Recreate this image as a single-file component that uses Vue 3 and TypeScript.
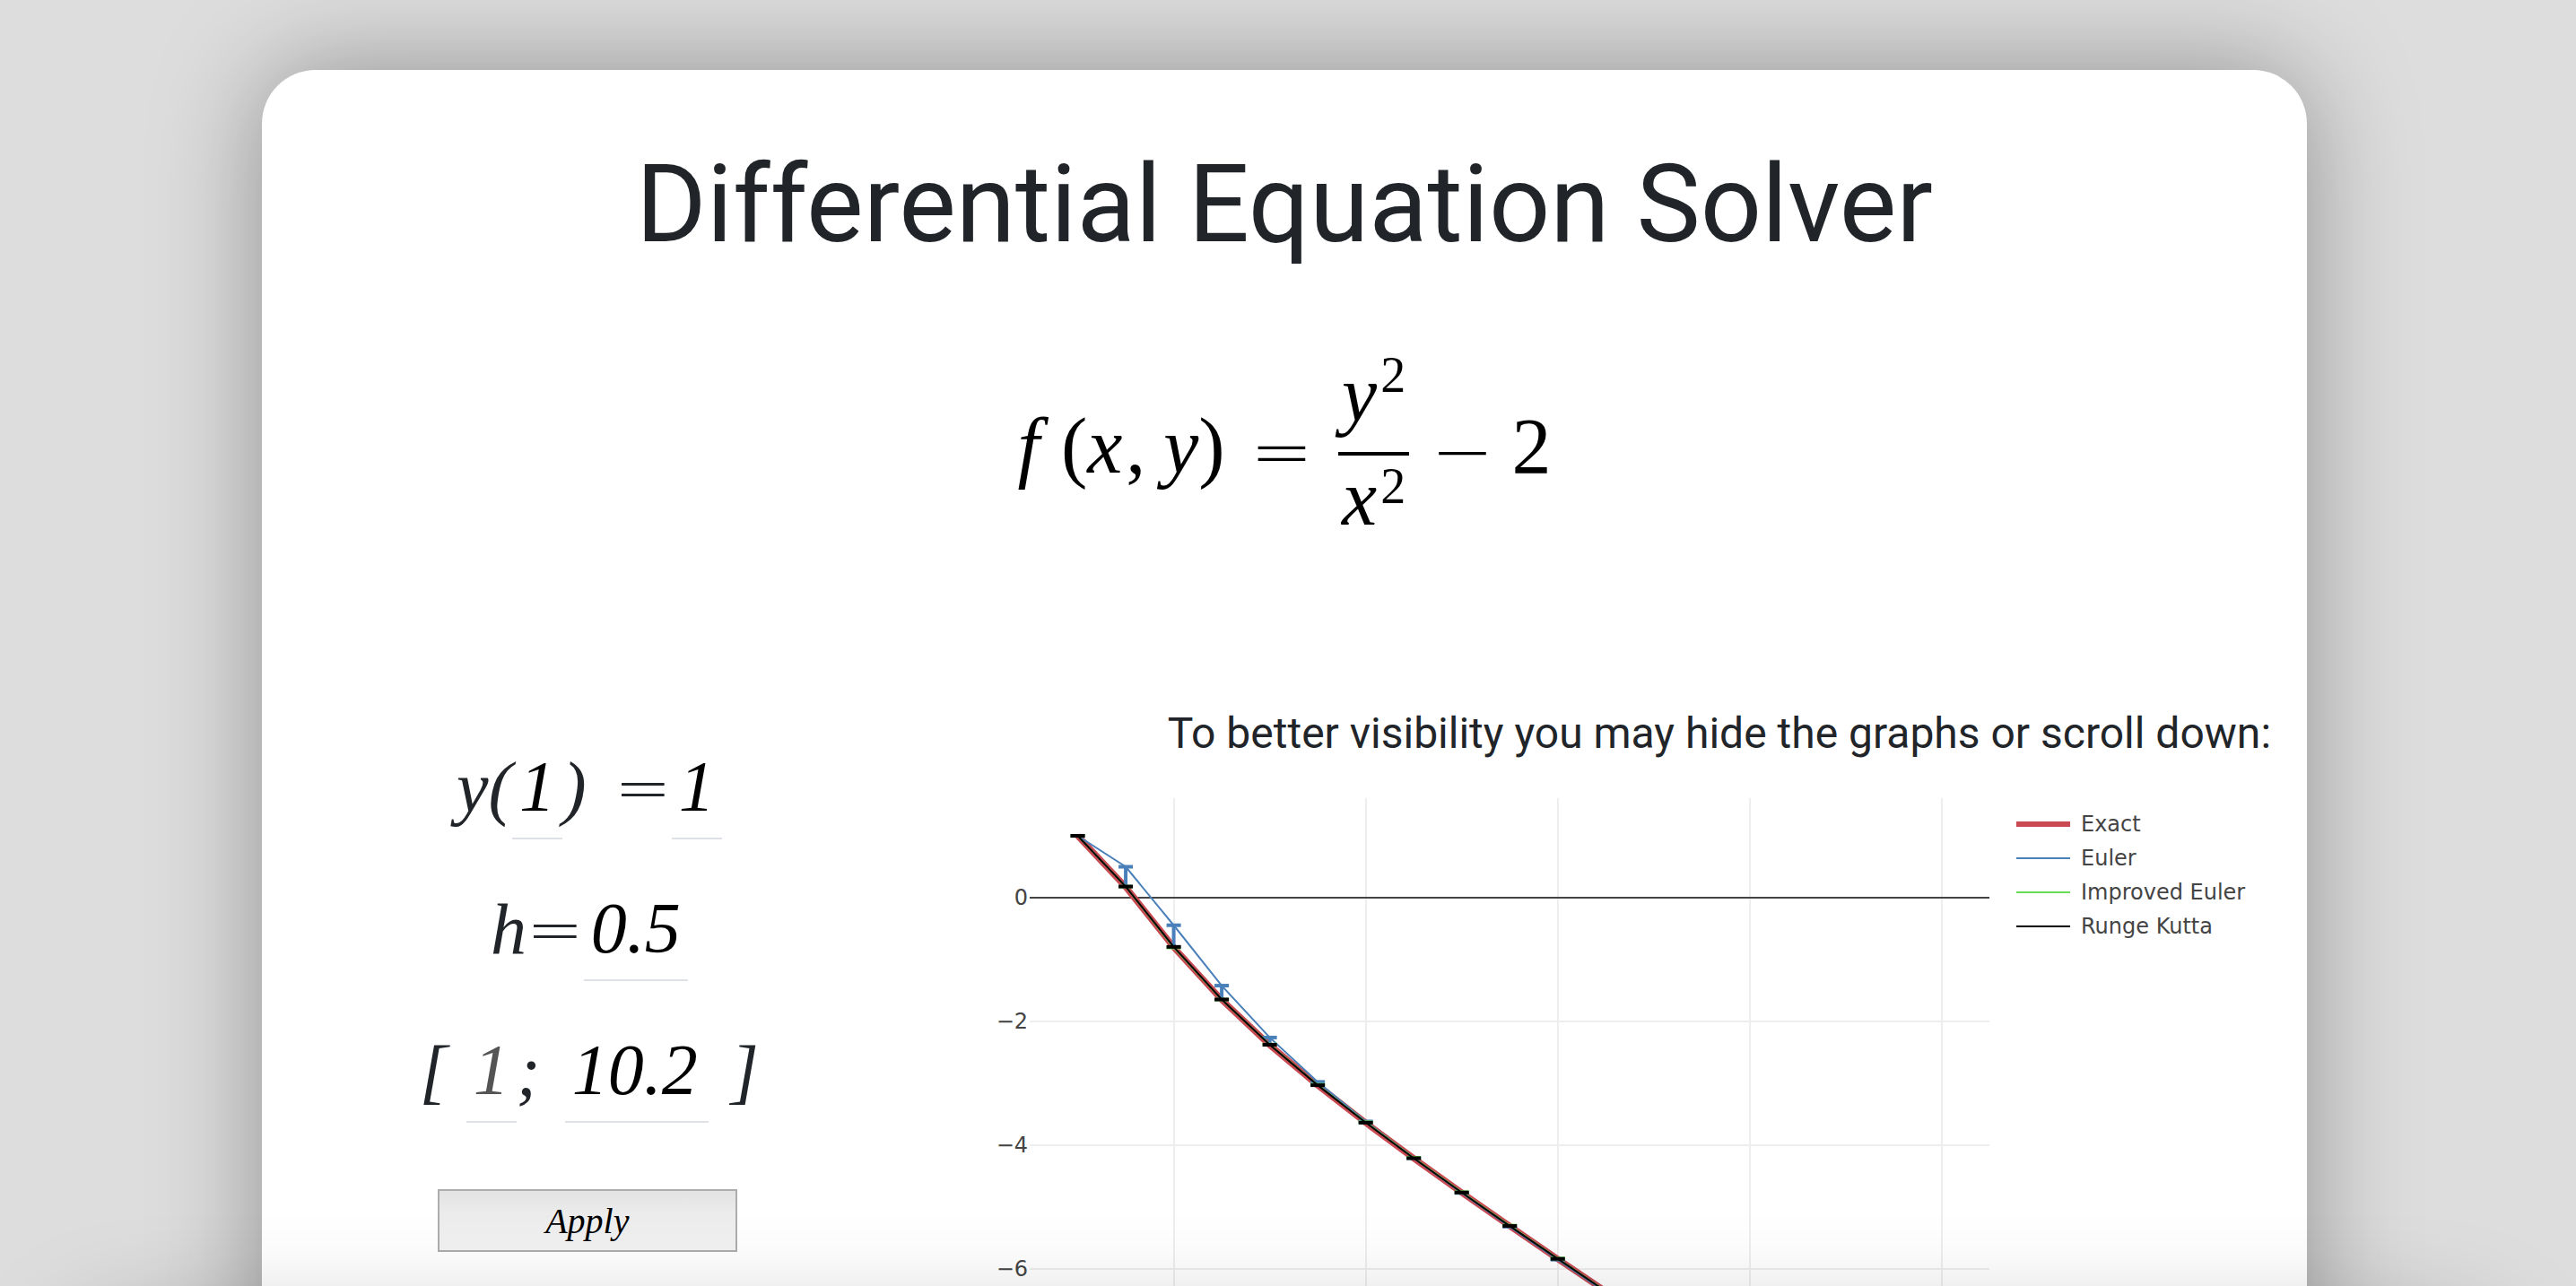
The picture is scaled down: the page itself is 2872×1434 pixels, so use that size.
<script setup lang="ts">
import { ref, computed } from 'vue'

interface Point { x: number; y: number }
interface Series { name: string; color: string; legendWidth: number; lineWidth: number; points: Point[]; bars: boolean }

const x0 = ref('1')
const y0 = ref('1')
const step = ref('0.5')
const end = ref('10.2')

const f = (x: number, y: number): number => (y * y) / (x * x) - 2

// Closed form of y' = y²/x² − 2 through (x0, y0)
const exactAt = (x: number): number => {
  const a = Number(x0.value)
  const v = Number(y0.value) / a
  const c = (v - 2) / ((v + 1) * a ** 3)
  const k = c * x ** 3
  return (x * (2 + k)) / (1 - k)
}

type Method = (x: number, y: number, h: number) => number

const euler: Method = (x, y, h) => y + h * f(x, y)
const improved: Method = (x, y, h) => y + h * f(x + h / 2, y + (h / 2) * f(x, y))
const rungeKutta: Method = (x, y, h) => {
  const k1 = f(x, y)
  const k2 = f(x + h / 2, y + (h / 2) * k1)
  const k3 = f(x + h / 2, y + (h / 2) * k2)
  const k4 = f(x + h, y + h * k3)
  return y + (h / 6) * (k1 + 2 * k2 + 2 * k3 + k4)
}

const xs = computed<number[]>(() => {
  const h = Number(step.value)
  const out: number[] = []
  if (!(h > 0)) return out
  for (let x = Number(x0.value); x <= Number(end.value) && out.length < 500; x += h) out.push(x)
  return out
})

const solve = (m: Method): Point[] => {
  let y = Number(y0.value)
  return xs.value.map((x, i) => {
    if (i > 0) y = m(xs.value[i - 1], y, x - xs.value[i - 1])
    return { x, y }
  })
}

const series = computed<Series[]>(() => [
  { name: 'Exact', color: '#c94a53', legendWidth: 6, lineWidth: 7, points: xs.value.map((x) => ({ x, y: exactAt(x) })), bars: false },
  { name: 'Euler', color: '#4a80ba', legendWidth: 2, lineWidth: 2, points: solve(euler), bars: true },
  { name: 'Improved Euler', color: '#66dd55', legendWidth: 2, lineWidth: 2, points: solve(improved), bars: true },
  { name: 'Runge Kutta', color: '#000000', legendWidth: 2, lineWidth: 2, points: solve(rungeKutta), bars: true },
])

const hidden = ref<string[]>([])
const toggle = (name: string): void => {
  hidden.value = hidden.value.includes(name) ? hidden.value.filter((n) => n !== name) : [...hidden.value, name]
}

// Plot coordinates
const left = 60
const px = (x: number): number => left + (x - 0.5) * 107
const py = (y: number): number => 111 - y * 69
const path = (p: Point[]): string => p.map((q) => `${px(q.x).toFixed(1)},${py(q.y).toFixed(1)}`).join(' ')
const xTicks = [2, 4, 6, 8, 10]
const yTicks = [-2, -4, -6, -8, -10]
</script>

<template>
  <div class="page">
    <main class="card">
      <h1>Differential Equation Solver</h1>

      <div class="formula">
        <span class="sym"><i class="fn">f</i>(<i>x</i><span class="comma">,</span><i>y</i>)</span>
        <span class="op eq">=</span>
        <span class="frac">
          <span class="num"><i>y</i><sup>2</sup></span>
          <span class="den"><i>x</i><sup>2</sup></span>
        </span>
        <span class="op">−</span>
        <span class="sym">2</span>
      </div>

      <div class="columns">
        <form class="params" @submit.prevent>
          <div class="row">
            <label for="x0">y(</label>
            <input id="x0" v-model="x0" class="short" />
            <label for="y0" class="after">)</label><label for="y0" class="op">=</label>
            <input id="y0" v-model="y0" class="short" />
          </div>
          <div class="row">
            <label for="h">h</label><label for="h" class="op">=</label>
            <input id="h" v-model="step" class="medium" />
          </div>
          <div class="row">
            <label for="from" class="open">[</label>
            <input id="from" :value="x0" class="short" disabled />
            <label for="to" class="semi">;</label>
            <input id="to" v-model="end" class="long" />
            <span class="close">]</span>
          </div>
          <button type="submit" class="apply">Apply</button>
        </form>

        <section class="graph">
          <h2>To better visibility you may hide the graphs or scroll down:</h2>
          <div class="chart">
            <svg class="plot" viewBox="0 0 1130 800" role="img" aria-label="Solutions">
              <line v-for="t in xTicks" :key="'x' + t" :x1="px(t)" :x2="px(t)" y1="0" y2="800" class="grid" />
              <line v-for="t in yTicks" :key="'y' + t" x1="60" x2="1130" :y1="py(t)" :y2="py(t)" class="grid" />
              <line x1="60" x2="1130" :y1="py(0)" :y2="py(0)" class="zero" />
              <text v-for="t in [0, ...yTicks]" :key="'t' + t" x="58" :y="py(t) + 8" class="tick">{{ String(t).replace('-', '−') }}</text>
              <template v-for="s in series" :key="s.name">
                <g v-if="!hidden.includes(s.name)" :stroke="s.color" fill="none">
                  <polyline :points="path(s.points)" :stroke-width="s.lineWidth" />
                  <g v-if="s.bars" stroke-width="4">
                    <template v-for="p in s.points" :key="p.x">
                      <line :x1="px(p.x)" :x2="px(p.x)" :y1="py(p.y)" :y2="py(exactAt(p.x))" />
                      <line :x1="px(p.x) - 8" :x2="px(p.x) + 8" :y1="py(p.y)" :y2="py(p.y)" />
                    </template>
                  </g>
                </g>
              </template>
            </svg>
            <ul class="legend">
              <li v-for="s in series" :key="s.name">
                <button type="button" :class="{ off: hidden.includes(s.name) }" @click="toggle(s.name)">
                  <svg width="60" height="8" viewBox="0 0 60 8" aria-hidden="true">
                    <line x1="0" x2="60" y1="4" y2="4" :stroke="s.color" :stroke-width="s.legendWidth" shape-rendering="crispEdges" />
                  </svg>
                  {{ s.name }}
                </button>
              </li>
            </ul>
          </div>
        </section>
      </div>
    </main>
    <div class="next"></div>
  </div>
</template>

<style>
body {
  margin: 0;
  background: #dddddd;
}
</style>

<style scoped>
.page {
  box-sizing: border-box;
  height: 100vh;
  overflow: hidden;
  padding: 78px 300px 0 292px;
  font-family: Roboto, sans-serif;
  color: #212529;
}
.card {
  padding-top: 78px;
  border-radius: 60px;
  background: #fff;
  box-shadow: 0 0 120px rgba(0, 0, 0, 0.35);
}
h1 {
  margin: 0;
  font-size: 120px;
  font-weight: 400;
  line-height: 144px;
  text-align: center;
}
.formula {
  display: flex;
  justify-content: center;
  align-items: center;
  margin-top: 90px;
  height: 232px;
  font-family: "Liberation Serif", serif;
  font-size: 88px;
  line-height: 96px;
  color: #000;
}
.sym {
  padding-bottom: 16px;
}
.fn {
  margin-right: 24px;
}
.comma {
  margin: 0 20px 0 4px;
}
.op {
  font-family: "DejaVu Sans Light", "DejaVu Sans", sans-serif;
  font-weight: 200;
}
.formula .op {
  margin: 0 20px 0 24px;
  padding-bottom: 6px;
  font-size: 84px;
}
.formula .eq {
  margin: 0 28px;
}
.frac {
  display: flex;
  flex-direction: column;
}
.num,
.den {
  padding: 0 4px;
  height: 112px;
}
.num {
  border-bottom: 4px solid #000;
}
sup {
  margin-left: 4px;
  font-size: 56px;
  line-height: 0;
  vertical-align: 32px;
}
.den sup {
  vertical-align: 24px;
}
.columns {
  display: flex;
  align-items: flex-start;
  margin-top: 168px;
}
.params {
  box-sizing: border-box;
  flex: 0 0 32%;
  display: flex;
  flex-direction: column;
  align-items: center;
  padding-top: 46px;
  font-family: "Liberation Serif", serif;
  font-size: 80px;
  font-style: italic;
}
.row {
  display: flex;
  align-items: center;
  height: 100px;
  margin-bottom: 58px;
}
.row > * {
  padding-bottom: 16px;
}
.row .op {
  font-style: normal;
  font-size: 76px;
}
.row input {
  box-sizing: border-box;
  height: 100px;
  padding: 0 0 16px 8px;
  border: 0;
  border-bottom: 2px solid #dee2e6;
  border-radius: 0;
  background: transparent;
  font: inherit;
  color: #000;
  outline: none;
}
.row input:disabled {
  color: #545454;
}
.short {
  width: 56px;
}
.medium {
  width: 116px;
}
.long {
  width: 160px;
}
.after {
  width: 58px;
}
.semi {
  width: 54px;
}
.open {
  width: 52px;
}
.close {
  width: 56px;
  text-align: right;
}
.apply {
  width: 334px;
  height: 70px;
  margin: 16px 4px 0 0;
  border: 2px solid #adadad;
  background: linear-gradient(#e3e3e3, #ececec 40%, #f2f2f2);
  font: italic 40px "Liberation Serif", serif;
  color: #000;
}
.graph {
  flex: 1;
  min-width: 0;
}
h2 {
  margin: 0 40px 0 0;
  font-size: 48px;
  font-weight: 400;
  line-height: 56px;
  text-align: right;
}
.chart {
  display: flex;
  align-items: flex-start;
  margin: 44px 60px 0 66px;
}
.plot {
  flex: 1;
  min-width: 0;
}
.grid,
.zero {
  stroke: #eee;
  stroke-width: 2;
  shape-rendering: crispEdges;
}
.zero {
  stroke: #444;
}
.tick {
  font: 24px "DejaVu Sans", sans-serif;
  text-anchor: end;
  fill: #444;
}
.legend {
  flex: 0 0 264px;
  margin: 0;
  padding: 10px 0 0 30px;
  list-style: none;
}
.legend button {
  display: flex;
  align-items: center;
  gap: 12px;
  height: 38px;
  padding: 0;
  border: 0;
  background: none;
  font: 24px "DejaVu Sans", sans-serif;
  color: #444;
  white-space: nowrap;
}
.legend .off {
  opacity: 0.5;
}
.next {
  position: relative;
  height: 400px;
  margin: -203px -208px 0;
  border-radius: 60px;
  background: #fff;
  box-shadow: 0 0 120px rgba(0, 0, 0, 0.35);
}
</style>
